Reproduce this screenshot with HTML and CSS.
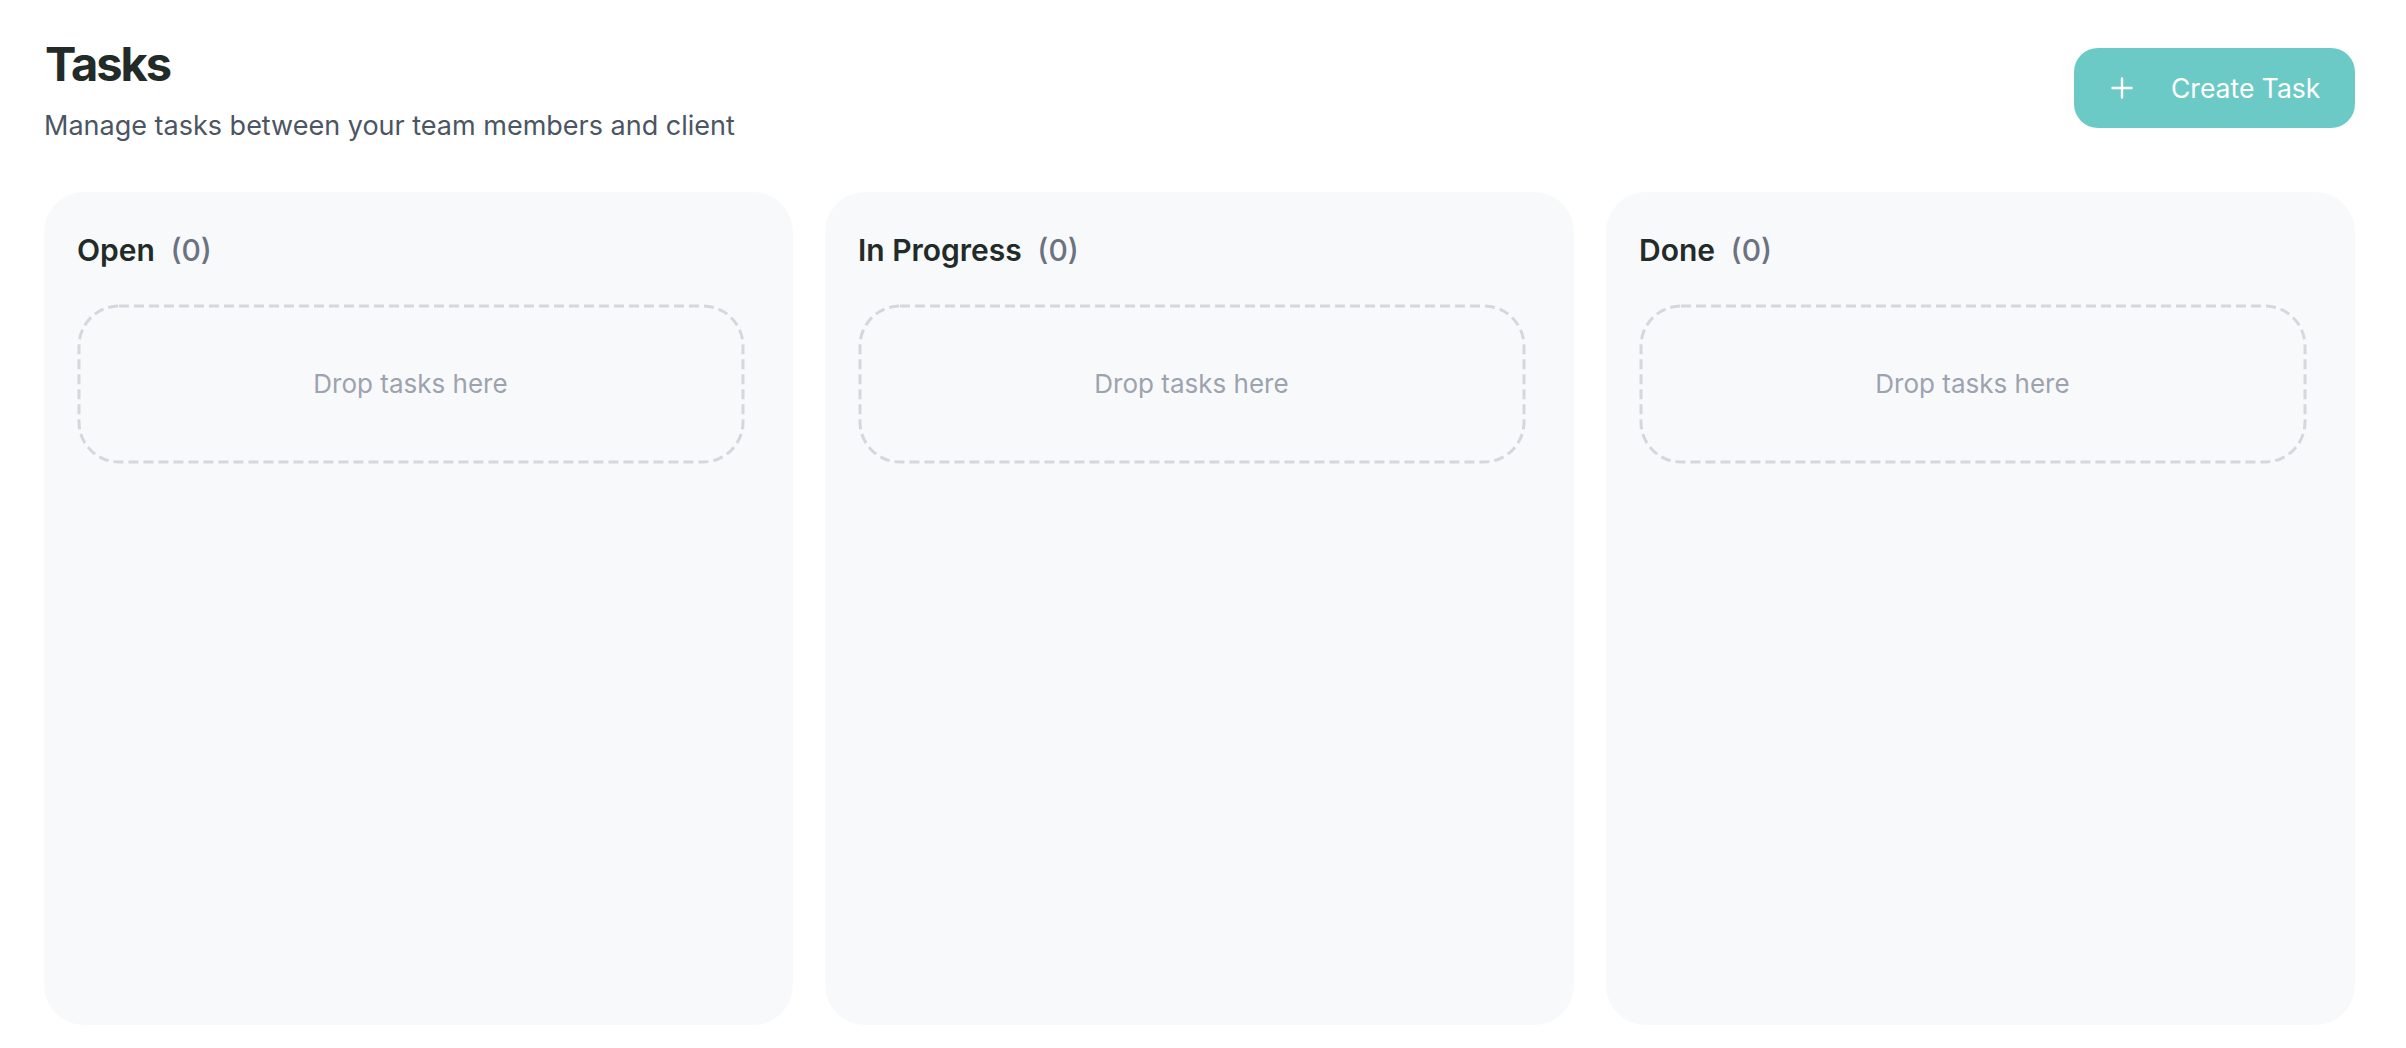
FILE: index.html
```html
<!DOCTYPE html>
<html lang="en">
<head>
<meta charset="utf-8">
<title>Tasks</title>
<link rel="stylesheet" href="styles.css">
</head>
<body>
<div class="page">
  <header class="topbar">
    <div class="heading">
      <h1 class="title">Tasks</h1>
      <p class="subtitle">Manage tasks between your team members and client</p>
    </div>
    <button class="create-btn" type="button">
      <svg class="plus" width="22" height="22" viewBox="0 0 22 22" aria-hidden="true">
        <path d="M11 1.5V20.5M1.5 11H20.5" stroke="#ffffff" stroke-width="2.4" stroke-linecap="round" fill="none"/>
      </svg>
      <span>Create Task</span>
    </button>
  </header>
  <main class="board">
    <section class="column">
      <h2 class="col-head">Open <span class="count">(0)</span></h2>
      <div class="dropzone">
        <svg class="dash" aria-hidden="true"><rect width="100%" height="100%" rx="40" ry="40"/></svg>
        <span>Drop tasks here</span>
      </div>
    </section>
    <section class="column">
      <h2 class="col-head">In Progress <span class="count">(0)</span></h2>
      <div class="dropzone">
        <svg class="dash" aria-hidden="true"><rect width="100%" height="100%" rx="40" ry="40"/></svg>
        <span>Drop tasks here</span>
      </div>
    </section>
    <section class="column">
      <h2 class="col-head">Done <span class="count">(0)</span></h2>
      <div class="dropzone">
        <svg class="dash" aria-hidden="true"><rect width="100%" height="100%" rx="40" ry="40"/></svg>
        <span>Drop tasks here</span>
      </div>
    </section>
  </main>
</div>
</body>
</html>
```
FILE: styles.css
```css
* { box-sizing: border-box; }
html, body { margin: 0; padding: 0; background: #ffffff; }
body { font-family: "Inter", "Liberation Sans", sans-serif; color: #222b28; }

.page {
  height: 100vh;
  display: flex;
  flex-direction: column;
  padding: 35px 51px 23px 44px;
}

.topbar {
  display: flex;
  justify-content: space-between;
  align-items: flex-start;
}

.title {
  margin: 0 0 0 1px;
  font-size: 47px;
  line-height: 57.6px;
  font-weight: 700;
  color: #222b28;
  letter-spacing: -2px;
}

.subtitle {
  margin: 13px 0 0 0;
  font-size: 27px;
  line-height: 40.5px;
  color: #4b5563;
}

.create-btn {
  margin-top: 13px;
  width: 281px;
  height: 80px;
  border: none;
  border-radius: 24px;
  background: #6ccac6;
  color: #ffffff;
  font-family: inherit;
  font-size: 26.5px;
  display: flex;
  align-items: center;
  padding: 0 0 0 37px;
  gap: 38px;
  cursor: pointer;
}
.plus { flex: none; display: block; }

.board {
  flex: 1;
  margin-top: 46px;
  display: grid;
  grid-template-columns: repeat(3, 1fr);
  gap: 32px;
}

.column {
  background: #f8f9fb;
  border-radius: 40px;
  padding: 37px 49px 0 33px;
}

.col-head {
  margin: 0;
  font-size: 30px;
  line-height: 42px;
  font-weight: 600;
  color: #222b28;
}
.count {
  margin-left: 8px;
  font-weight: 500;
  color: #6b7280;
}

.dropzone {
  position: relative;
  margin-top: 33px;
  height: 159px;
  border-radius: 40px;
  display: flex;
  align-items: center;
  justify-content: center;
  font-size: 26px;
  color: #9ca3af;
}

.dash {
  position: absolute;
  top: 1.5px;
  left: 1.5px;
  width: calc(100% - 3px);
  height: calc(100% - 3px);
  overflow: visible;
  pointer-events: none;
}
.dash rect {
  fill: none;
  stroke: #d5d7dc;
  stroke-width: 3;
  stroke-dasharray: 10 5;
}
```
